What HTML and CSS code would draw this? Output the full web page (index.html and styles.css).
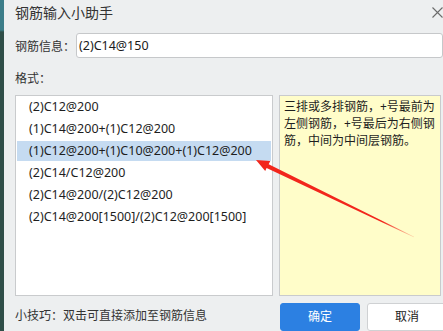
FILE: index.html
```html
<!DOCTYPE html>
<html lang="zh-CN">
<head>
<meta charset="utf-8">
<title>钢筋输入小助手</title>
<link rel="stylesheet" href="styles.css">
</head>
<body>
<div class="desk"></div>
<div class="dialog">
  <div class="titlebar">
    <span class="title">钢筋输入小助手</span>
    <svg class="close" width="11" height="11" viewBox="0 0 11 11"><path d="M0.5 0.5L10.5 10.5M10.5 0.5L0.5 10.5" stroke="#6b6b6b" stroke-width="1.1" fill="none"/></svg>
  </div>
  <div class="field">
    <span class="label">钢筋信息：</span>
    <div class="input">(2)C14@150</div>
  </div>
  <div class="section">格式：</div>
  <div class="panels">
    <ul class="list">
      <li>(2)C12@200</li>
      <li>(1)C14@200+(1)C12@200</li>
      <li class="sel">(1)C12@200+(1)C10@200+(1)C12@200</li>
      <li>(2)C14/C12@200</li>
      <li>(2)C14@200/(2)C12@200</li>
      <li>(2)C14@200[1500]/(2)C12@200[1500]</li>
    </ul>
    <div class="note">三排或多排钢筋，+号最前为左侧钢筋，+号最后为右侧钢筋，中间为中间层钢筋。</div>
  </div>
  <div class="footer">
    <span class="tip">小技巧：双击可直接添加至钢筋信息</span>
    <div class="btn primary">确定</div>
    <div class="btn">取消</div>
  </div>
</div>
<svg class="arrow" width="443" height="331" viewBox="0 0 443 331">
  <defs>
    <linearGradient id="fade" gradientUnits="userSpaceOnUse" x1="256" y1="160" x2="414" y2="237">
      <stop offset="0" stop-color="#f2261c"/>
      <stop offset="0.8" stop-color="#f2261c"/>
      <stop offset="1" stop-color="#f2261c" stop-opacity="0.15"/>
    </linearGradient>
  </defs>
  <polygon fill="url(#fade)" points="256,160 270.3,161 268.7,164.2 414.2,236.8 413.8,237.2 266.6,168 265.2,171"/>
</svg>
</body>
</html>
```
FILE: styles.css
```css
html, body {
  margin: 0;
  padding: 0;
  width: 443px;
  height: 331px;
  overflow: hidden;
}
body {
  display: flex;
  background: #2e4a45;
  font-family: "Noto Sans", "Noto Sans CJK SC", sans-serif;
  font-size: 12px;
  color: #222;
  position: relative;
}
.desk {
  width: 4px;
  flex: none;
  background: linear-gradient(#3c7d89 0, #3c7d89 30px, #2f4e48 32px, #2f4e48 100%);
}
.dialog {
  flex: 1;
  background: #edeff0;
  padding-left: 11px;
  display: flex;
  flex-direction: column;
}
.titlebar {
  height: 26px;
  display: flex;
  align-items: center;
  justify-content: space-between;
  padding-right: 0;
}
.title {
  font-size: 14px;
  color: #333;
  line-height: 26px;
}
.close {
  margin-right: 0;
  margin-top: -1px;
}
.field {
  display: flex;
  align-items: center;
  margin-top: 7px;
}
.label {
  width: 61px;
  color: #333;
}
.input {
  flex: 1;
  height: 23px;
  line-height: 23px;
  background: #fff;
  border: 1px solid #c6c8ca;
  border-radius: 3px;
  padding-left: 2px;
  color: #1a1a1a;
  font-size: 12.5px;
}
.section {
  margin-top: 13px;
  line-height: 16px;
  color: #333;
}
.panels {
  margin-top: 8px;
  display: grid;
  grid-template-columns: 258px 1fr;
  column-gap: 6px;
  height: 207px;
  margin-right: -12px;
}
.list {
  list-style: none;
  margin: 0;
  padding: 1px;
  background: #fff;
  border: 1px solid #c9cbcd;
}
.list li {
  height: 20px;
  line-height: 20px;
  margin-bottom: 2px;
  padding-left: 12px;
  font-size: 12.5px;
  color: #1e1e1e;
  white-space: nowrap;
}
.list li.sel {
  background: #c5dbf1;
}
.note {
  background: #fffdc9;
  border: 1px solid #c9cbcd;
  padding: 2px 0 0 4px;
  line-height: 17px;
  width: 156px;
  color: #1e1e1e;
}
.footer {
  display: flex;
  align-items: flex-start;
  margin-top: 7px;
}
.tip {
  flex: 1;
  line-height: 26px;
  color: #333;
}
.btn {
  width: 78px;
  height: 26px;
  line-height: 26px;
  text-align: center;
  border: 1px solid #cfd1d3;
  border-radius: 3px;
  background: #fff;
  color: #222;
  flex: none;
}
.btn.primary {
  background: #2c80e2;
  border-color: #2c80e2;
  color: #fff;
  margin-right: 7px;
}
.btn + .btn {
  margin-right: -4px;
}
.arrow {
  position: absolute;
  left: 0;
  top: 0;
  pointer-events: none;
}
```
